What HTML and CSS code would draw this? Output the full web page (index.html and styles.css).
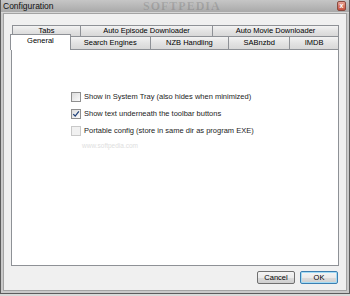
FILE: index.html
```html
<!DOCTYPE html>
<html lang="en">
<head>
  <meta charset="UTF-8">
  <title>Configuration</title>
  <link rel="stylesheet" href="styles.css">
</head>
<body>
  <div class="window">
    <div class="titlebar">
      <span class="title">Configuration</span>
      <span class="watermark">SOFTPEDIA</span>
      <span class="close">x</span>
    </div>
    <div class="client">
      <!-- two rows of tabs, the front row holds the selected one -->
      <div class="tab-row back">
        <div class="tab w-tabs">Tabs</div>
        <div class="tab w-episode">Auto Episode Downloader</div>
        <div class="tab w-movie">Auto Movie Downloader</div>
      </div>
      <div class="tab-row front">
        <div class="tab w-general selected">General</div>
        <div class="tab w-search">Search Engines</div>
        <div class="tab w-nzb">NZB Handling</div>
        <div class="tab w-sab">SABnzbd</div>
        <div class="tab w-imdb">IMDB</div>
      </div>
      <div class="panel">
        <label class="option"><span class="box"></span>Show in System Tray (also hides when minimized)</label>
        <label class="option"><span class="box checked"><svg viewBox="0 0 10 10" width="8" height="8"><path d="M1.5 5.2 L4 7.6 L8.6 1.8" fill="none" stroke="#21427a" stroke-width="1.6"/></svg></span>Show text underneath the toolbar buttons</label>
        <label class="option"><span class="box faded"></span>Portable config (store in same dir as program EXE)</label>
        <div class="site">www.softpedia.com</div>
      </div>
      <div class="buttons">
        <button class="btn">Cancel</button>
        <button class="btn default">OK</button>
      </div>
    </div>
  </div>
</body>
</html>
```

FILE: styles.css
```css
* {
  box-sizing: border-box;
}

body {
  margin: 0;
  width: 350px;
  height: 296px;
  background: #d9d9d9;
  font-family: "Liberation Sans", Arial, sans-serif;
  font-size: 7.5px;
  color: #000;
}

.window {
  position: relative;
  height: 294px;
  border: 1px solid #5c5c5c;
  border-top: none;
  background: #c9c9c9;
  padding: 0 2px 2px;
  display: flex;
  flex-direction: column;
}

.titlebar {
  height: 13px;
  display: flex;
  align-items: center;
  padding-left: 2px;
  margin: 0 -2px;
  background: linear-gradient(#c6c6c6, #a9a9a9);
  border-bottom: 1px solid #d6d6d6;
}

.title {
  font-size: 8.5px;
  color: #111;
}

.watermark {
  position: absolute;
  left: 142px;
  top: 0;
  font-family: "Liberation Serif", serif;
  font-weight: bold;
  font-size: 12px;
  line-height: 13px;
  letter-spacing: 1px;
  color: rgba(0, 0, 0, 0.14);
}

.close {
  margin-left: auto;
  margin-right: 3px;
  width: 9px;
  height: 10px;
  border: 1px solid #8a4a40;
  border-radius: 2px;
  background: linear-gradient(#e9a394, #c5503c);
  color: #fff;
  font-size: 7px;
  font-weight: bold;
  line-height: 8px;
  text-align: center;
}

.client {
  flex: 1;
  background: #f0f0f0;
  border: 1px solid #a3a3a3;
  padding: 11px 8px 0 7px;
}

.tab-row {
  display: flex;
  margin-left: 1px;
}

.tab {
  border: 1px solid #8e9196;
  border-bottom: none;
  margin-right: -1px;
  background: linear-gradient(#f3f3f3, #e3e3e3 50%, #d8d8d8);
  text-align: center;
  white-space: nowrap;
}

.back .tab {
  height: 11px;
  line-height: 10px;
}

.front .tab {
  height: 13px;
  line-height: 11px;
}

.tab.selected {
  position: relative;
  z-index: 1;
  height: 16px;
  margin: -2px -1px -1px -2px;
  background: #fff;
  line-height: 12px;
}

.w-tabs { width: 69px; }
.w-episode { width: 133px; }
.w-movie { width: 127px; }
.w-general { width: 61px; }
.w-search { width: 81px; }
.w-nzb { width: 80px; }
.w-sab { width: 62px; }
.w-imdb { width: 50px; }

.panel {
  height: 217px;
  width: 328px;
  background: #fff;
  border: 1px solid #8e9196;
  padding: 38px 0 0 59px;
  display: flex;
  flex-direction: column;
  align-items: flex-start;
}

.option {
  display: flex;
  align-items: center;
  gap: 3px;
  height: 17px;
  color: #1c1c1c;
}

.box {
  width: 10px;
  height: 10px;
  border: 1px solid #8f8f8f;
  background: linear-gradient(135deg, #dcdcdc, #fbfbfb);
  display: flex;
  align-items: center;
  justify-content: center;
}

.box.faded {
  border-color: #c9c9c9;
  background: #f1f1f1;
}

.site {
  margin: 3px 0 0 11px;
  font-size: 6.5px;
  color: #dedede;
}

.buttons {
  display: flex;
  justify-content: flex-end;
  gap: 5px;
  margin-top: 5px;
}

.btn {
  width: 38px;
  height: 13px;
  padding: 0;
  border: 1px solid #707070;
  border-radius: 2px;
  background: linear-gradient(#f4f4f4, #ebebeb 50%, #dcdcdc 51%, #cfcfcf);
  font-family: "Liberation Sans", Arial, sans-serif;
  font-size: 7.5px;
  color: #000;
}

.btn.default {
  border-color: #3c7fb1;
  box-shadow: inset 0 0 0 1px #a4dcf5;
}
```
